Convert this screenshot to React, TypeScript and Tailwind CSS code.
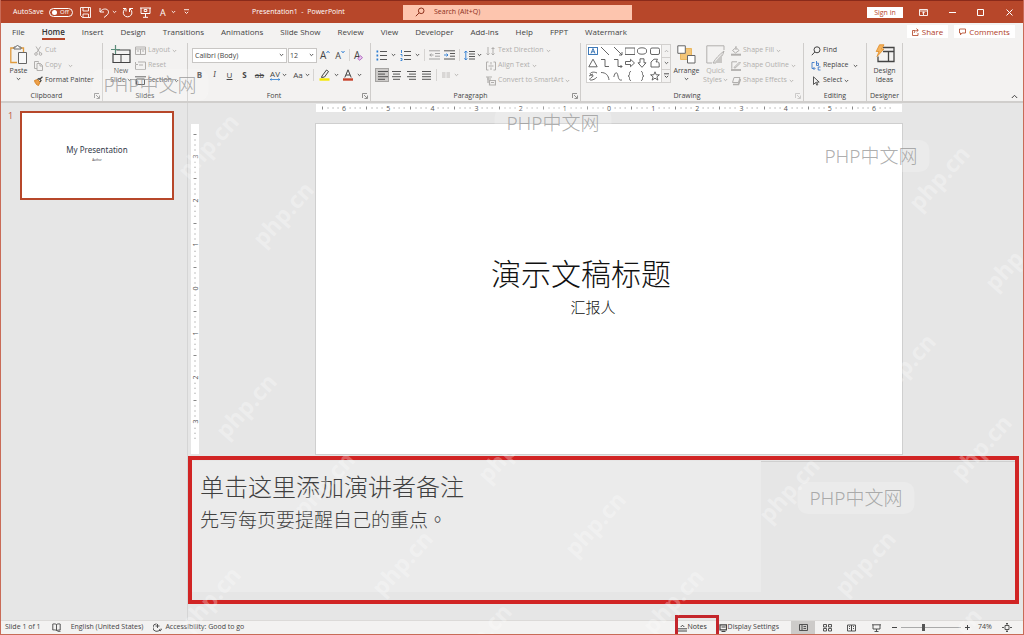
import React from "react";

type Kids = { children?: React.ReactNode };

function Ico({ w, h, children, className = "" }: Kids & { w: number; h: number; className?: string }) {
  return (
    <svg
      width={w}
      height={h}
      viewBox={`0 0 ${w} ${h}`}
      fill="none"
      stroke="currentColor"
      strokeWidth="1"
      className={`shrink-0 ${className}`}
      aria-hidden="true"
    >
      {children}
    </svg>
  );
}

const Chev = ({ className = "" }: { className?: string }) => (
  <Ico w={5} h={4} className={className}>
    <path d="M0.8 1l1.7 1.7L4.2 1" strokeWidth="0.9" />
  </Ico>
);

const Launcher = () => (
  <button aria-label="More options" className="absolute right-[2px] top-[3px] text-[#777]">
    <Ico w={6} h={6}>
      <path d="M0.5 5V0.5H5M2 2l3 3M5.5 2.5v3h-3" strokeWidth="0.8" />
    </Ico>
  </button>
);

function Group({ label, width, launcher, dim, children }: Kids & { label: string; width: string; launcher?: boolean; dim?: boolean }) {
  return (
    <section aria-label={label} className={`flex shrink-0 flex-col border-r border-[#cfcdcb] ${width}`}>
      <div className="flex h-[47px]">{children}</div>
      <div className={`relative h-[11px] text-center text-[7px] leading-[11px] text-[#444] ${launcher ? "pr-[10px]" : ""}`}>
        {label}
        {launcher && (
          <span className={dim ? "opacity-40" : ""}>
            <Launcher />
          </span>
        )}
      </div>
    </section>
  );
}

function RowBtn({ icon, text, dim, chev }: { icon: React.ReactNode; text: string; dim?: boolean; chev?: string }) {
  return (
    <button className={`flex h-[15px] items-center gap-[2px] whitespace-nowrap ${dim ? "text-[#b1afad]" : "text-[#444]"}`}>
      {icon}
      <span>{text}</span>
      {chev !== undefined && <Chev className={chev} />}
    </button>
  );
}

const Sep = ({ className = "" }: { className?: string }) => <span className={`h-3 w-px shrink-0 bg-[#d6d4d2] ${className}`} />;

function Lines({ rows }: { rows: [number, number][] }) {
  return (
    <Ico w={11} h={11}>
      <path d={rows.map(([a, b], i) => `M${a} ${1.5 + i * 2.6}H${b}`).join("")} strokeWidth="0.9" />
    </Ico>
  );
}

const tabs = ["File", "Home", "Insert", "Design", "Transitions", "Animations", "Slide Show", "Review", "View", "Developer", "Add-ins", "Help", "FPPT", "Watermark"];

function TitleBar() {
  return (
    <header className="grid h-[23px] shrink-0 grid-cols-[251px_151px_minmax(0,229px)_1fr] items-center border-t border-[#8a2a1a] bg-[#b7472a] text-[7px] text-white">
      <div className="flex items-center pl-3">
        <span className="w-[36px]">AutoSave</span>
        <button role="switch" aria-checked="false" aria-label="AutoSave" className="flex h-[9px] w-6 items-center gap-[3px] rounded-full border border-white px-[2px] text-[6px] leading-none">
          <span className="size-[5px] rounded-full bg-white" />
          Off
        </button>
        <button aria-label="Save" className="ml-[7px]">
          <Ico w={11} h={11}><path d="M.5.5h10v10H2.5l-2-2zM3 .5v3.5h5.5V.5M3 10.500V7h5.500v3.500" strokeWidth="0.9" /></Ico>
        </button>
        <button aria-label="Undo" className="ml-[8px] flex items-center gap-[2px]">
          <Ico w={11} h={11}><path d="M1 1v4h4M1.200 4.800C3 2 6 1.500 8 2.500s2 4 0 5.500L5 10.500" /></Ico>
          <Chev />
        </button>
        <button aria-label="Redo" className="ml-[5px]">
          <Ico w={11} h={11}><path d="M3.500 1.800a4.300 4.300 0 1 0 4.500.2M1 1.500h3v3M7.500 5V1.500H11" /></Ico>
        </button>
        <button aria-label="Start slide show" className="ml-[7px]">
          <Ico w={11} h={11}><path d="M0 1h11M1 1v5.500h9V1M5.500 6.500V10M3 10.300h5M4.200 2.500h2.600v2H4.200z" /></Ico>
        </button>
        <button aria-label="Font color" className="ml-[9px] flex items-center gap-[5px] text-[9px] leading-none">A<Chev /></button>
        <button aria-label="Customize toolbar" className="ml-[8px]">
          <Ico w={5} h={6}><path d="M0 .7h5M.8 2.800l1.700 1.700 1.700-1.700" strokeWidth="0.900" /></Ico>
        </button>
      </div>
      <h1 className="whitespace-nowrap">Presentation1 &nbsp;-&nbsp; PowerPoint</h1>
      <label className="flex h-[15px] items-center gap-[9px] bg-[#fdc5ae] pl-3 text-[#8c2f1a]">
        <Ico w={10} h={10}><circle cx="6.200" cy="3.800" r="2.800" /><path d="M4 6L.8 9.200" /></Ico>
        <input aria-label="Search" placeholder="Search (Alt+Q)" className="min-w-0 flex-1 bg-transparent text-[7px] text-[#8c2f1a] outline-none placeholder:text-[#8c2f1a]" />
      </label>
      <div className="flex items-center justify-end pr-[10px]">
        <button className="h-[11px] w-9 bg-white text-[7px] leading-[11px] text-[#b7472a]">Sign in</button>
        <button aria-label="Ribbon display options" className="ml-4">
          <Ico w={9} h={7}><path d="M.5.5h8v6h-8zM.5 2h8M4.500 6V3M3.200 4.200l1.300-1.300 1.300 1.300" strokeWidth="0.900" /></Ico>
        </button>
        <button aria-label="Minimize" className="ml-[21px]"><Ico w={7} h={7}><path d="M0 3.500h7" /></Ico></button>
        <button aria-label="Maximize" className="ml-[21px]"><Ico w={7} h={7}><path d="M.5.5h6v6h-6z" /></Ico></button>
        <button aria-label="Close" className="ml-[22px]"><Ico w={7} h={7}><path d="M.5.5l6 6M6.500.5l-6 6" /></Ico></button>
      </div>
    </header>
  );
}

function TabBar() {
  return (
    <nav className="flex h-[18px] shrink-0 items-start justify-between bg-[#f3f2f1] text-[8px] text-[#444]">
      <div className="flex gap-[17px] whitespace-nowrap pl-[11px]">
        {tabs.map((t) => (
          <button key={t} className={`h-[17px] border-b-2 leading-[17px] ${t === "Home" ? "border-[#b7472a] font-semibold text-[#333]" : "border-transparent"}`}>
            {t}
          </button>
        ))}
      </div>
      <div className="flex gap-[6px] pr-[8px] pt-[2px] text-[#b0401f]">
        <button className="flex h-[13px] w-[41px] items-center justify-center gap-[3px] bg-white">
          <Ico w={7} h={8}><path d="M3 2.500H.5v5h5.500V5M2.200 5c0-2 1.300-2.700 3.800-2.700M4.500.6L6.300 2.300 4.500 4" strokeWidth="0.800" /></Ico>
          Share
        </button>
        <button className="flex h-[13px] w-[61px] items-center justify-center gap-[3px] bg-white">
          <Ico w={7} h={8}><path d="M.5 1h6v4H3L1.500 6.800V5h-1z" strokeWidth="0.800" /></Ico>
          Comments
        </button>
      </div>
    </nav>
  );
}

function Gallery() {
  const shapes: React.ReactNode[] = [
    <><rect x=".5" y="1.500" width="9" height="7" stroke="#2b6cb0" /><path d="M3 7.500l2-5 2 5M3.800 5.800h2.500" stroke="#2b6cb0" strokeWidth="0.900" /></>,
    <path d="M1 1l8 8" />,
    <path d="M1 1l8 8M9 6v3H6" />,
    <rect x="0" y="2" width="10" height="6.500" />,
    <ellipse cx="5" cy="5" rx="4.700" ry="3.200" />,
    <rect x=".5" y="2" width="9" height="6.500" rx="1.500" />,
    <path d="M5 1.200l4.200 7.600H.8z" />,
    <path d="M1 1.500h4v7h4" />,
    <path d="M1 1.500h4v7h4M7.500 7L9 8.500 7.500 10" />,
    <path d="M.5 3.500h5V1.300L9.500 5 5.500 8.700V6.500h-5z" />,
    <path d="M3 .8h4v4h2L5 9.300 1 4.800h2z" />,
    <path d="M1 9V4l3-2.800h3.500L6 4c2-.5 3 0 3.200 2V9z" />,
    <path d="M9 2C5 0 1 2 2.500 3.500S7 4 4 6 1 9.500 4 9s5-3 5-3M1 5l4-2" />,
    <path d="M1 1.500c5 0 7.500 3 8 7.500" />,
    <path d="M.8 6C2 1 4 0 5 5s2.500 4 4 4" />,
    <path d="M6 .5c-3 0 0 4-3 4.500 3 .5 0 4.500 3 4.500" />,
    <path d="M4 .5c3 0 0 4 3 4.500-3 .5 0 4.500-3 4.500" />,
    <path d="M5 .8l1.200 3h3.200L6.900 5.900l1 3.200L5 7.200 2.100 9.100l1-3.200L.6 3.800h3.200z" />,
  ];
  return (
    <div className="ml-[5px] mt-px flex h-[39px] w-[85px] shrink-0 border border-[#d2d0ce] bg-white text-[#555]">
      <div className="grid flex-1 grid-cols-6 grid-rows-3 place-items-center">
        {shapes.map((s, i) => (
          <button key={i} aria-label={`Shape ${i + 1}`}>
            <Ico w={10} h={10}><g strokeWidth="0.900">{s}</g></Ico>
          </button>
        ))}
      </div>
      <div className="grid w-[9px] grid-rows-3 border-l border-[#d2d0ce] bg-[#f3f2f1]">
        <button aria-label="Scroll up" className="grid place-items-center opacity-40"><Chev className="rotate-180" /></button>
        <button aria-label="Scroll down" className="grid place-items-center border-y border-[#d2d0ce]"><Chev /></button>
        <button aria-label="More shapes" className="grid place-items-center"><Ico w={5} h={6}><path d="M0 .8h5M.8 2.800l1.700 1.700 1.700-1.700" /></Ico></button>
      </div>
    </div>
  );
}

function Bullets({ num }: { num?: boolean }) {
  return (
    <Ico w={11} h={11}>
      <path d="M4 1.500h7M4 5.500h7M4 9.500h7" strokeWidth="0.900" />
      <path d={num ? "M1.500 0v3M.5 4.500h1.500v2M.5 8.500h1.500v2H.5" : "M.5 1.500h1.700M.5 5.500h1.700M.5 9.500h1.700"} stroke="#2b7cd3" strokeWidth={num ? 0.9 : 1.8} />
    </Ico>
  );
}

function Ribbon() {
  const fmt = "flex w-[15px] shrink-0 justify-center";
  return (
    <div className="flex h-[62px] shrink-0 border-b-2 border-[#d0cecc] bg-[#f3f2f1] pt-[2px] text-[7px] text-[#444]">
      <Group label="Clipboard" width="w-[102px]" launcher>
        <button className="flex w-[33px] shrink-0 flex-col items-center pl-[2px] pt-[2px]">
          <Ico w={18} h={20}>
            <path d="M7 17.500H.8V3h12.700v4" stroke="#e09a3c" strokeWidth="1.300" />
            <path d="M4 4V2h2c0-2 3-2 3 0h2v2zM8.500 7.500h8v11h-8z" fill="#f8f8f8" stroke="#666" />
          </Ico>
          <span className="mt-px leading-[9px]">Paste</span>
          <Chev className="mt-[2px]" />
        </button>
        <div>
          <RowBtn dim text="Cut" icon={<Ico w={9} h={10}><path d="M2 .5l4 6.500M6.500.5L2.500 7" /><circle cx="2" cy="8" r="1.300" /><circle cx="6.500" cy="8" r="1.300" /></Ico>} />
          <RowBtn dim text="Copy" chev="ml-[5px]" icon={<Ico w={9} h={10}><path d="M3 7.500H.5v-7h4v1M3 2.500h3.500l2 2v5H3zM6 2.500v2.500h2.500" /></Ico>} />
          <RowBtn text="Format Painter" icon={<Ico w={9} h={10}><path d="M.5 4.500l3-1L6 6 4.500 9.500C2.500 9 1 7 .5 4.500z" fill="#eda04a" stroke="#d98526" /><path d="M3.500 3.500l1.500-1 2 2L6 6M6 3l2.500-2.200" stroke="#444" strokeWidth="1.300" /></Ico>} />
        </div>
      </Group>

      <Group label="Slides" width="w-[85px]">
        <button className="flex w-[32px] shrink-0 flex-col items-center pl-[4px] pt-[2px]">
          <Ico w={20} h={19}>
            <path d="M5.500 5h13.500v12.500H2V8" strokeWidth="1.200" />
            <path d="M2 9.500h17M10 9.500v8" />
            <path d="M4.500 0v9M0 4.500h9" stroke="#5b8c7a" strokeWidth="1.200" />
          </Ico>
          <span className="mt-[2px] leading-[9px]">New</span>
          <span className="flex items-center gap-px leading-[9px]">Slide<Chev /></span>
        </button>
        <div>
          <RowBtn dim text="Layout" chev="" icon={<Ico w={11} h={9}><path d="M.5 1h10v7.500H.5zM.5 3h10M5.500 3v5.500M2 5h2M7 5h2" /></Ico>} />
          <RowBtn dim text="Reset" icon={<Ico w={11} h={9}><path d="M3 1h7.500v7.500H.5V4M.5 1v2.500H3M4 4h4" /></Ico>} />
          <RowBtn text="Section" chev="" icon={<Ico w={11} h={9}><path d="M0 .8h11M1.500 3h8v5.500h-8zM0 3v5.500" /></Ico>} />
        </div>
      </Group>

      <Group label="Font" width="w-[183px]" launcher>
        <div className="min-w-0 flex-1 pl-1 pt-[2px]">
          <div className="flex h-5 items-center">
            <label className="flex h-[15px] w-[95px] items-center border border-[#c8c6c4] bg-white">
              <select aria-label="Font name" className="w-full appearance-none bg-transparent pl-[2px] leading-[13px] outline-none"><option>Calibri (Body)</option></select>
              <Chev className="mr-[2px]" />
            </label>
            <label className="ml-px flex h-[15px] w-[29px] items-center border border-[#c8c6c4] bg-white">
              <select aria-label="Font size" className="w-full appearance-none bg-transparent pl-px leading-[13px] outline-none"><option>12</option></select>
              <Chev className="mr-[2px]" />
            </label>
            <button aria-label="Increase font size" className="ml-[3px] flex text-[10px] leading-[11px]">A<Ico w={4} h={4}><path d="M.5 3L2 1.200 3.500 3" stroke="#2b7cd3" /></Ico></button>
            <button aria-label="Decrease font size" className="ml-[5px] flex text-[9px] leading-[11px]">A<Ico w={4} h={4}><path d="M.5 1L2 2.800 3.500 1" stroke="#2b7cd3" /></Ico></button>
            <Sep className="mx-[4px]" />
            <button aria-label="Clear formatting" className="flex items-end text-[10px] leading-[11px]">A<Ico w={6} h={6} className="-ml-[3px]"><path d="M.7 3.500L3.500.8l2 1.800-2.700 2.700z" fill="#e9c6f0" stroke="#a34fb5" strokeWidth="0.800" /></Ico></button>
          </div>
          <div className="flex h-5 items-center text-[8px]">
            <button className={`${fmt} font-bold`}>B</button>
            <button className={`${fmt} font-serif italic`}>I</button>
            <button className={`${fmt} underline`}>U</button>
            <button className={`${fmt} font-bold`}>S</button>
            <button className={`${fmt} line-through`}>ab</button>
            <button aria-label="Character spacing" className="flex w-[23px] items-center justify-center gap-[2px]">
              <span className="flex flex-col items-center leading-[8px]">AV<Ico w={10} h={3}><path d="M0 1.500h10M1.500.3L.3 1.500l1.200 1.200M8.500.3l1.200 1.200-1.200 1.200" stroke="#2b7cd3" strokeWidth="0.800" /></Ico></span>
              <Chev />
            </button>
            <button aria-label="Change case" className="flex w-[23px] items-center justify-center gap-[2px]">Aa<Chev /></button>
            <Sep className="mr-[5px]" />
            <button aria-label="Highlight color" className="flex items-center gap-1">
              <Ico w={11} h={12}><path d="M3 7l4.500-6 2 1.500L5.500 8 2.500 8.500z" /><path d="M.5 10.500h10" stroke="#f5e800" strokeWidth="2.400" /></Ico><Chev />
            </button>
            <button aria-label="Font color" className="ml-1 flex items-center gap-1">
              <Ico w={10} h={12}><path d="M1.800 8.500L5 .8l3.200 7.700M3 6h4" /><path d="M0 10.500h10" stroke="#c8432b" strokeWidth="2.400" /></Ico><Chev />
            </button>
          </div>
        </div>
      </Group>

      <Group label="Paragraph" width="w-[210px]" launcher>
        <div className="w-[115px] shrink-0 pl-[5px] pt-[2px]">
          <div className="flex h-5 items-center">
            <button aria-label="Bullets" className="flex items-center gap-1"><Bullets /><Chev /></button>
            <button aria-label="Numbering" className="ml-1 flex items-center gap-1"><Bullets num /><Chev /></button>
            <Sep className="mx-1" />
            <button aria-label="Decrease indent" className="text-[#999]"><Ico w={11} h={10}><path d="M0 .8h11M6 3.500h5M6 6.200h5M0 9h11M4.500 5H.8M2.300 3.500L.8 5l1.500 1.500" strokeWidth="0.900" /></Ico></button>
            <button aria-label="Increase indent" className="ml-1"><Ico w={11} h={10}><path d="M0 .8h11M6 3.500h5M6 6.200h5M0 9h11" strokeWidth="0.900" /><path d="M0 5h4M2.500 3.500L4 5 2.500 6.500" stroke="#2b7cd3" strokeWidth="0.900" /></Ico></button>
            <Sep className="mx-[4px]" />
            <button aria-label="Line spacing" className="flex items-center gap-[2px]"><Ico w={11} h={11}><path d="M5 1.500h6M5 4h6M5 6.500h6M5 9h6" strokeWidth="0.900" /><path d="M1.800 1v9M.3 2.700L1.800 1l1.500 1.700M.3 8.300L1.800 10l1.500-1.700" stroke="#2b7cd3" strokeWidth="0.900" /></Ico><Chev /></button>
          </div>
          <div className="flex h-5 items-center">
            <button aria-label="Align left" className="-ml-px flex size-[14px] items-center justify-center border border-[#a5a3a1] bg-[#cdcbc9]"><Lines rows={[[1, 11], [1, 8], [1, 11], [1, 8]]} /></button>
            <button aria-label="Center" className="ml-[2px]"><Lines rows={[[1, 10], [2, 9], [1, 10], [2, 9]]} /></button>
            <button aria-label="Align right" className="ml-1"><Lines rows={[[1, 10], [3, 10], [1, 10], [3, 10]]} /></button>
            <button aria-label="Justify" className="ml-1"><Lines rows={[[1, 10], [1, 10], [1, 10], [1, 10]]} /></button>
            <Sep className="ml-1 mr-[5px]" />
            <button aria-label="Columns" className="flex items-center gap-1 text-[#b1afad]"><Ico w={8} h={6}><path d="M0 1h3.500M0 3h3.500M0 5h3.500M4.500 1H8M4.500 3H8M4.500 5H8" strokeWidth="0.800" /></Ico><Chev /></button>
          </div>
        </div>
        <div>
          <RowBtn dim text="Text Direction" chev="" icon={<Ico w={10} h={10}><path d="M2 1v8M.5 7.500L2 9l1.500-1.500M7 1v8M5.500 2.500h3M5.500 7.500L7 9l1.500-1.500" /></Ico>} />
          <RowBtn dim text="Align Text" chev="" icon={<Ico w={10} h={10}><path d="M2.500 1H.5v8h2M7.500 1h2v8h-2M2.500 5h5M5 1v2.500M5 9V6.500" /></Ico>} />
          <RowBtn dim text="Convert to SmartArt" chev="" icon={<Ico w={10} h={10}><path d="M0 1h6M1 3h4M3.500 4.500h6v4.500h-6zM2 1v6M5 6.500h3" strokeWidth="1.200" /></Ico>} />
        </div>
      </Group>

      <Group label="Drawing" width="w-[223px]" launcher dim>
        <Gallery />
        <button className="flex w-[31px] shrink-0 flex-col items-center pt-[2px]">
          <Ico w={19} h={19}><path d="M3.500 3.500h11v11h-11z" fill="#f3c577" stroke="#e9b65f" /><path d="M.8.8h7.500v7.500H.8zM10.500 10.500H18V18h-7.500z" fill="#fff" stroke="#666" /></Ico>
          <span className="mt-[2px] leading-[9px]">Arrange</span>
          <Chev className="mt-[2px]" />
        </button>
        <button className="flex w-[27px] shrink-0 flex-col items-center pt-[2px] text-[#b1afad]">
          <Ico w={19} h={19}><path d="M18 5V.8H.8V18H6M7 18c3-5 6-8 11-12-1 5-5 9-8 12z" /><path d="M8 18l8-9v9z" fill="#c9c7c5" stroke="none" /></Ico>
          <span className="mt-[2px] leading-[9px]">Quick</span>
          <span className="flex items-center gap-px leading-[9px]">Styles<Chev /></span>
        </button>
        <div className="pl-[2px]">
          <RowBtn dim text="Shape Fill" chev="" icon={<Ico w={10} h={10}><path d="M1.500 4.500L5 1.500l3 3L4.500 7zM5 0v4" /><path d="M0 8.700h10" strokeWidth="2" /></Ico>} />
          <RowBtn dim text="Shape Outline" chev="" icon={<Ico w={10} h={10}><path d="M6 .8H.8v7M3 6.500L8.500 1l1 1L4 7.200z" /><path d="M0 9h10" strokeWidth="1.800" /></Ico>} />
          <RowBtn dim text="Shape Effects" chev="" icon={<Ico w={10} h={10}><path d="M3 1.500h6l-1.500 5h-6z" /><path d="M2 8.500h5.500L9.500 3" strokeWidth="1.600" /></Ico>} />
        </div>
      </Group>

      <Group label="Editing" width="w-[63px]">
        <div className="pl-[7px]">
          <RowBtn text="Find" icon={<Ico w={10} h={10}><circle cx="6" cy="3.800" r="3" /><path d="M3.800 6L.8 9.200" /></Ico>} />
          <RowBtn text="Replace" chev="ml-[3px]" icon={<Ico w={10} h={10}><path d="M3.500 1.500H1v6h2.500M2.500 6l1.500 1.500L2.500 9M5.500 0v4.500M5.500 2.200h2v2.300h-2M9.500 6H7.200v3h2.300" stroke="#3c78c8" strokeWidth="0.900" /></Ico>} />
          <RowBtn text="Select" chev="" icon={<Ico w={10} h={10}><path d="M2.500.8v7.700l2-2 1.300 2.700 1-.5-1.200-2.600h2.600z" strokeWidth="0.900" /></Ico>} />
        </div>
      </Group>

      <Group label="Designer" width="w-[36px]">
        <button className="flex w-full flex-col items-center pt-[1px]">
          <Ico w={20} h={20}>
            <path d="M8 3.500h11v14H3v-5M8 7.500h11M13.500 7.500v10" strokeWidth="1.300" />
            <path d="M4.500.8H9L6.500 5H9L2 12.500 4 7.500H1.200z" fill="#f5b35c" stroke="#e08a25" strokeWidth="0.800" />
          </Ico>
          <span className="mt-[2px] leading-[9px]">Design</span>
          <span className="leading-[9px]">Ideas</span>
        </button>
      </Group>
      <div className="flex flex-1 items-end justify-end pb-[2px] pr-[5px]">
        <button aria-label="Collapse ribbon"><Ico w={7} h={5}><path d="M.8 4l2.700-2.700L6.200 4" /></Ico></button>
      </div>
    </div>
  );
}

function Ruler({ marks, vertical }: { marks: number[]; vertical?: boolean }) {
  return (
    <div
      aria-hidden="true"
      className={`flex bg-white text-[7px] text-[#555] ${vertical ? "w-2 flex-col py-[10px]" : "h-2 px-[6px]"}`}
    >
      {marks.map((m, i) => (
        <div key={i} className={`relative flex flex-1 items-center justify-center ${vertical ? "flex-col" : ""}`}>
          <svg viewBox={vertical ? "0 0 8 44" : "0 0 44 8"} preserveAspectRatio="none" className="absolute inset-0 size-full" stroke="#888" fill="none">
            {vertical ? (
              <path d="M2.500.5h3M3.500 6h1M3.500 11h1M3.500 16h1M3.500 28h1M3.500 33h1M3.500 38h1" />
            ) : (
              <path d="M.5 2.500v3M6 3.500v1M11 3.500v1M16 3.500v1M28 3.500v1M33 3.500v1M38 3.500v1" />
            )}
          </svg>
          <span className={`relative leading-none ${vertical ? "-rotate-90" : ""}`}>{m}</span>
        </div>
      ))}
    </div>
  );
}

function StatusBar() {
  return (
    <footer className="flex h-[14px] shrink-0 items-center border-t border-[#dcdad8] bg-[#f3f2f1] text-[7px] text-[#444]">
      <div className="flex flex-1 items-center pl-1">
        <span>Slide 1 of 1</span>
        <button aria-label="Spelling" className="ml-[11px]"><Ico w={9} h={9}><path d="M4.500 1.500C3.500.8 2 .8.800 1v6c1.200-.2 2.700-.2 3.700.5V1.500C5.500.8 7 .8 8.200 1v6c-1 0-2 0-3.700.5M5.500 8.300h3" strokeWidth="0.900" /></Ico></button>
        <button className="ml-[10px]">English (United States)</button>
        <button className="ml-[10px] flex items-center gap-[3px]">
          <Ico w={9} h={9}><path d="M3.500.8a3.800 3.800 0 1 0 3.800 5M4.500 1v4M2.500 3h4M6 7l1.200 1L9 5.500" strokeWidth="0.900" /></Ico>
          Accessibility: Good to go
        </button>
      </div>
      <div className="flex items-center">
        <div className="relative">
          <button className="flex w-[42px] items-center gap-px pl-[3px] text-[#333]">
            <Ico w={9} h={8}><path d="M2.700 3l1.800-1.800L6.300 3M0 4.800h9M0 7h9" strokeWidth="0.900" /></Ico>
            Notes
          </button>
          <span className="pointer-events-none absolute -top-[7px] left-0 h-6 w-[44px] border-[3px] border-[#c4252b]" />
        </div>
        <button className="flex items-center gap-px pl-[2px]">
          <Ico w={8} h={8}><path d="M1 .8h6.500v5H1zM2.500 7.500h4M2.500 3h4" strokeWidth="1.200" /></Ico>
          Display Settings
        </button>
        <button aria-label="Normal view" className="ml-3 grid h-[13px] w-6 place-items-center bg-[#cdcbc9]"><Ico w={9} h={7}><path d="M.5.5h8v6h-8zM3 .5v6M4.500 2.500h2.500M4.500 4.500h2.500" strokeWidth="0.900" /></Ico></button>
        <button aria-label="Slide sorter" className="ml-2"><Ico w={9} h={8}><path d="M.5.5h3v2.500h-3zM5.500.5h3v2.500h-3zM.5 4.500h3V7h-3zM5.500 4.500h3V7h-3z" strokeWidth="0.900" /></Ico></button>
        <button aria-label="Reading view" className="ml-[15px]"><Ico w={9} h={8}><path d="M.5 1h4v6h-4zM4.500 1h4v6h-4zM2 2.500h1M2 4.500h1M6 2.500h1M6 4.500h1" strokeWidth="0.900" /></Ico></button>
        <button aria-label="Slide show" className="ml-4"><Ico w={9} h={8}><path d="M0 .8h9M1 .8V5h7V.8M4.500 5v2.500M2.500 7.500h4" strokeWidth="0.900" /></Ico></button>
        <button aria-label="Zoom out" className="ml-[11px]"><Ico w={5} h={5}><path d="M0 2.500h5" /></Ico></button>
        <input
          type="range"
          aria-label="Zoom"
          min={10}
          max={140}
          defaultValue={58}
          className="mx-[4px] h-[9px] w-[60px] appearance-none bg-[linear-gradient(#aaa,#aaa)] bg-[length:100%_1px] bg-center bg-no-repeat [&::-webkit-slider-thumb]:h-[7px] [&::-webkit-slider-thumb]:w-[3px] [&::-webkit-slider-thumb]:appearance-none [&::-webkit-slider-thumb]:bg-[#555]"
        />
        <button aria-label="Zoom in"><Ico w={5} h={5}><path d="M0 2.500h5M2.500 0v5" /></Ico></button>
        <span className="ml-2 w-[24px]">74%</span>
        <button aria-label="Fit slide to window" className="mr-[11px]"><Ico w={10} h={9}><path d="M3 2.500h4v4H3zM5 0v2M5 7v2M0 4.500h2M8 4.500h2M4 1l1-1 1 1M4 8l1 1 1-1" strokeWidth="0.900" /></Ico></button>
      </div>
    </footer>
  );
}

const stamps: [number, number][] = [
  [207, 146], [282, 214], [938, 178], [1014, 258], [904, 366], [245, 406], [980, 447], [323, 484], [507, 450],
  [788, 490], [594, 524], [401, 563], [864, 563], [672, 601], [209, 599], [480, 636], [950, 640],
];
const badges: [number, number][] = [[149, 85], [552, 123], [870, 156], [855, 498]];

function Watermarks() {
  return (
    <div aria-hidden="true" className="pointer-events-none absolute inset-0 overflow-hidden">
      {stamps.map(([x, y]) => (
        <span key={`${x}-${y}`} style={{ left: x, top: y }} className="absolute -translate-x-1/2 -translate-y-1/2 -rotate-48 whitespace-nowrap text-[23px] font-bold leading-none text-white/30">
          php.cn
        </span>
      ))}
      {badges.map(([x, y]) => (
        <span key={`${x}-${y}`} style={{ left: x, top: y }} className="absolute flex h-8 w-[117px] -translate-x-1/2 -translate-y-1/2 items-center justify-center whitespace-nowrap rounded-[10px] bg-white/20 font-['Noto_Sans','Noto_Sans_CJK_SC',sans-serif] text-[19px] font-light text-[#999]/80">
          PHP中文网
        </span>
      ))}
    </div>
  );
}

export default function App() {
  return (
    <div className="relative flex min-h-screen flex-col overflow-hidden border-x border-b border-[#c96b57] bg-[#e6e6e6] font-['Open_Sans','Noto_Sans','Noto_Sans_CJK_SC',sans-serif]">
      <TitleBar />
      <TabBar />
      <Ribbon />
      <div className="flex flex-1">
        <aside className="flex w-[187px] shrink-0 items-start border-r border-[#d5d5d5] pl-[7px] pt-2">
          <span className="w-3 text-[9px] leading-[10px] text-[#c0563f]">1</span>
          <button className="flex h-[89px] w-[154px] flex-col items-center justify-center border-2 border-[#b7472a] bg-white">
            <span className="font-['Noto_Sans','Open_Sans',sans-serif] text-[8px] leading-[12px] text-[#333a4a]">My Presentation</span>
            <span className="mb-1 text-[3px] leading-[8px] text-[#333]">Author</span>
          </button>
        </aside>
        <main className="flex min-w-0 flex-1 flex-col">
          <div className="flex flex-1 items-start pl-[3px]">
            <div className="mt-[21px] flex h-[330px]">
              <Ruler vertical marks={[3, 2, 1, 0, 1, 2, 3]} />
            </div>
            <div className="min-w-0 flex-1 pl-[116px] pr-[120px] pt-px">
              <div className="px-px">
                <Ruler marks={[6, 5, 4, 3, 2, 1, 0, 1, 2, 3, 4, 5, 6]} />
              </div>
              <div className="mt-[11px] flex aspect-[587/331] flex-col items-center justify-center border border-[#cfcfcf] bg-white font-['Noto_Sans_CJK_SC',sans-serif] text-[#111]">
                <h2 className="whitespace-nowrap pr-14 text-[30px] font-light leading-[38px]">演示文稿标题</h2>
                <p className="mb-[6px] mt-[5px] pr-8 text-[15px] font-light leading-[22px]">汇报人</p>
              </div>
            </div>
          </div>
          <section aria-label="Notes" className="mb-4 mr-1 flex h-[148px] shrink-0 border-4 border-[#d12424]">
            <div className="mb-2 mt-px w-[569px] bg-[#ebebeb] pl-[8px] pt-[7px] font-['Noto_Sans_CJK_SC',sans-serif] text-[#404040]">
              <h2 className="text-[24px] font-light leading-[36px]">单击这里添加演讲者备注</h2>
              <p lang="zh-Hant" className="font-['Noto_Sans_CJK_TC','Noto_Sans_CJK_SC',sans-serif] text-[19px] font-light leading-[30px]">先写每页要提醒自己的重点。</p>
            </div>
            <div className="mt-px flex-1 border-t border-[#cfcfcf]" />
          </section>
        </main>
      </div>
      <StatusBar />
      <Watermarks />
    </div>
  );
}
